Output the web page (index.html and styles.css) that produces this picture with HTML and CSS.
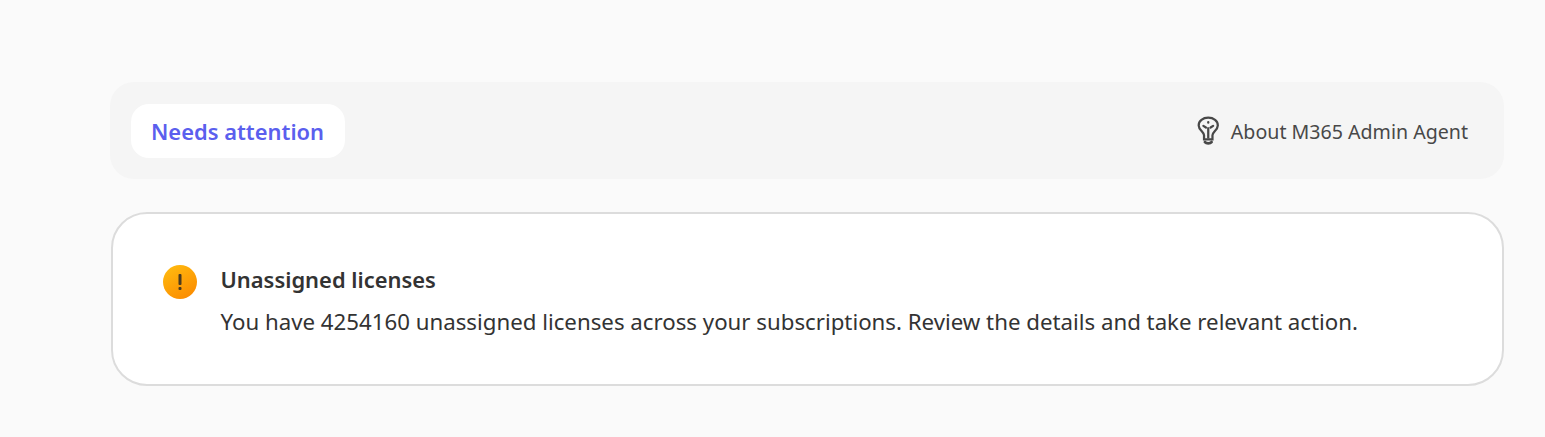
FILE: index.html
```html
<!DOCTYPE html>
<html>
<head>
<title>M365 Admin Agent</title>
<link rel="stylesheet" href="styles.css">
</head>
<body>
	<main class="page">
		<header class="topBar">
			<div class="tab">Needs attention</div>
			<a class="about">
				<svg class="bulbIcon" viewBox="0 0 24 32" width="22.500" height="30" fill="none" stroke="#484848">
					<path stroke-width="2.400" d="M7.500 25v-4.600c0-1.400-.7-2.300-2.200-3.900C3.700 14.800 1.800 12.900 1.800 10 1.800 5 6.300 1.800 12 1.800S22.200 5 22.200 10c0 2.900-1.900 4.800-3.500 6.500-1.500 1.600-2.200 2.500-2.200 3.900V25z"/>
					<path stroke-width="3" stroke-linecap="round" d="M8.500 27.800c1.500 1.800 5.500 1.800 7 0"/>
					<path stroke-width="2.400" d="M12 24V12"/>
					<path stroke-width="2.400" stroke-linecap="round" d="M6.800 10.500l2.700 1.800M17.200 10.500l-2.700 1.800M12 6.500v.6"/>
				</svg>
				<span class="aboutText">About M365 Admin Agent</span>
			</a>
		</header>
		<section class="card">
			<svg class="warnIcon" viewBox="0 0 34 34" width="34" height="34">
				<defs>
					<linearGradient id="warnFill" x1="0.2" y1="0" x2="0.8" y2="1">
						<stop offset="0" stop-color="#ffba0f"/>
						<stop offset="1" stop-color="#fb8a00"/>
					</linearGradient>
				</defs>
				<circle cx="17" cy="17" r="17" fill="url(#warnFill)"/>
				<rect x="15.500" y="9" width="3" height="11" rx="1" fill="#4a3a20"/>
				<rect x="15.500" y="22" width="3" height="3" rx="1" fill="#4a3a20"/>
			</svg>
			<div class="cardText">
				<h2>Unassigned licenses</h2>
				<p>You have 4254160 unassigned licenses across your subscriptions. Review the details and take relevant action.</p>
			</div>
		</section>
	</main>
</body>
</html>
```

FILE: styles.css
```css
body{
	margin:0;
	background-color:#fafafa;
	font-family:"Noto Sans", "Open Sans", sans-serif;
	color:#333;
}
.page{
	padding:82px 41px 0 110px;
}
.topBar{
	display:flex;
	align-items:center;
	justify-content:space-between;
	height:97px;
	padding:0 36px 0 21px;
	border-radius:24px;
	background-color:#f5f5f5;
}
.tab{
	display:flex;
	align-items:center;
	height:54px;
	padding:2px 21px 0 20px;
	box-sizing:border-box;
	border-radius:18px;
	background-color:#fff;
	color:#5b5fee;
	font-size:21.900px;
	font-weight:600;
}
.about{
	display:flex;
	align-items:center;
	gap:11.500px;
	color:#484848;
	font-size:19.600px;
}
.aboutText{
	padding-top:2px;
}
.card{
	display:flex;
	align-items:flex-start;
	gap:23px;
	height:174px;
	box-sizing:border-box;
	margin-top:33px;
	margin-left:1px;
	padding:50px 50px 0 50px;
	border:2px solid #dcdcdc;
	border-radius:36px;
	background-color:#fff;
}
.warnIcon{
	flex:none;
	margin-top:1px;
}
.cardText{
	padding-left:.5px;
}
.cardText h2{
	margin:0 0 10px;
	font-size:21.900px;
	line-height:32px;
	font-weight:600;
}
.cardText p{
	margin:0;
	font-size:22.250px;
	line-height:32px;
}
```
